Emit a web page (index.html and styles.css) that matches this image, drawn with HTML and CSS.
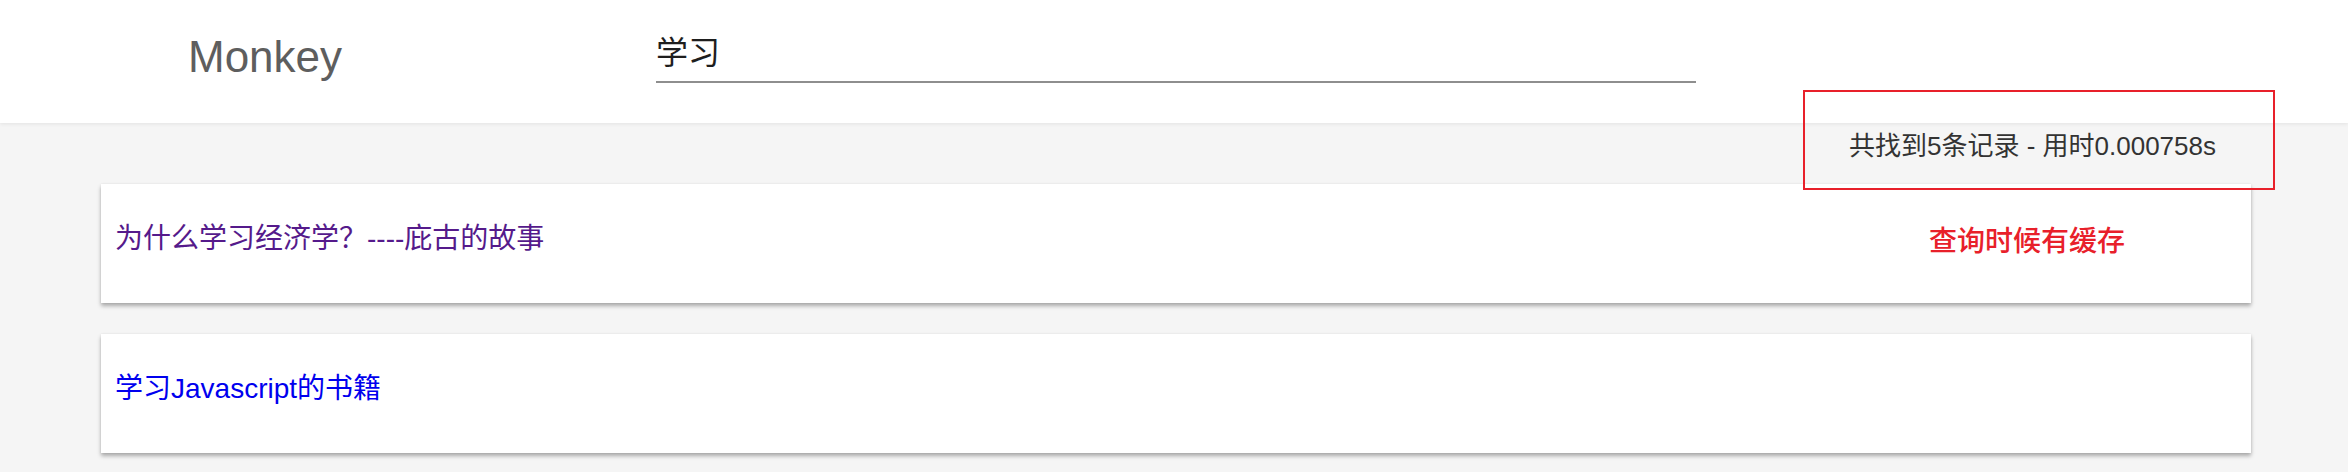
FILE: index.html
```html
<!DOCTYPE html>
<html lang="zh-CN">
<head>
<meta charset="utf-8">
<title>Monkey</title>
<link rel="stylesheet" href="styles.css">
</head>
<body>
<header class="header">
  <div class="logo">Monkey</div>
  <input class="search" type="text" value="学习">
</header>
<main class="results">
  <div class="stats">共找到5条记录 - 用时0.000758s</div>
  <div class="card"><a class="link visited" href="#">为什么学习经济学？----庇古的故事</a></div>
  <div class="card"><a class="link" href="#">学习Javascript的书籍</a></div>
</main>
<div class="note-box"></div>
<div class="note-text">查询时候有缓存</div>
</body>
</html>
```

FILE: styles.css
```css
html, body {
  margin: 0;
  padding: 0;
}

body {
  background: #f5f5f5;
  font-family: "Liberation Sans", "Noto Sans CJK SC", sans-serif;
  position: relative;
  min-height: 472px;
  overflow: hidden;
}

.header {
  height: 123px;
  box-sizing: border-box;
  background: #ffffff;
  display: flex;
  align-items: flex-start;
  padding-left: 188px;
  box-shadow: 0 1px 4px rgba(0, 0, 0, 0.08);
  position: relative;
  z-index: 1;
}

.logo {
  flex: 0 0 468px;
  margin-top: 32px;
  font-size: 44px;
  line-height: 50px;
  color: #5e5e5e;
}

.search {
  width: 1040px;
  height: 39px;
  margin-top: 30px;
  padding: 0 0 12px 0;
  border: none;
  border-bottom: 2px solid #8e8e8e;
  outline: none;
  background: transparent;
  font-family: "Liberation Sans", "Noto Sans CJK SC", sans-serif;
  font-size: 32px;
  color: #1e1e1e;
  box-sizing: content-box;
}

.results {
  margin: 0 97px 0 101px;
}

.stats {
  height: 61px;
  box-sizing: border-box;
  padding-top: 5px;
  padding-right: 35px;
  line-height: 36px;
  font-size: 26px;
  color: #333333;
  text-align: right;
}

.card {
  height: 119px;
  box-sizing: border-box;
  background: #ffffff;
  padding: 35px 0 0 14px;
  margin-bottom: 31px;
  line-height: 40px;
  font-size: 28px;
  box-shadow: 0 3px 4px rgba(0, 0, 0, 0.3), 0 0 2px rgba(0, 0, 0, 0.08);
}

.link {
  text-decoration: none;
  color: #0000ee;
}

.link.visited {
  color: #551a8b;
}

.note-box {
  position: absolute;
  left: 1803px;
  top: 90px;
  width: 472px;
  height: 100px;
  box-sizing: border-box;
  border: 2px solid #e8202a;
  z-index: 2;
}

.note-text {
  position: absolute;
  left: 1929px;
  top: 222px;
  font-size: 28px;
  line-height: 40px;
  font-weight: 500;
  color: #e8202a;
  z-index: 2;
}
```
